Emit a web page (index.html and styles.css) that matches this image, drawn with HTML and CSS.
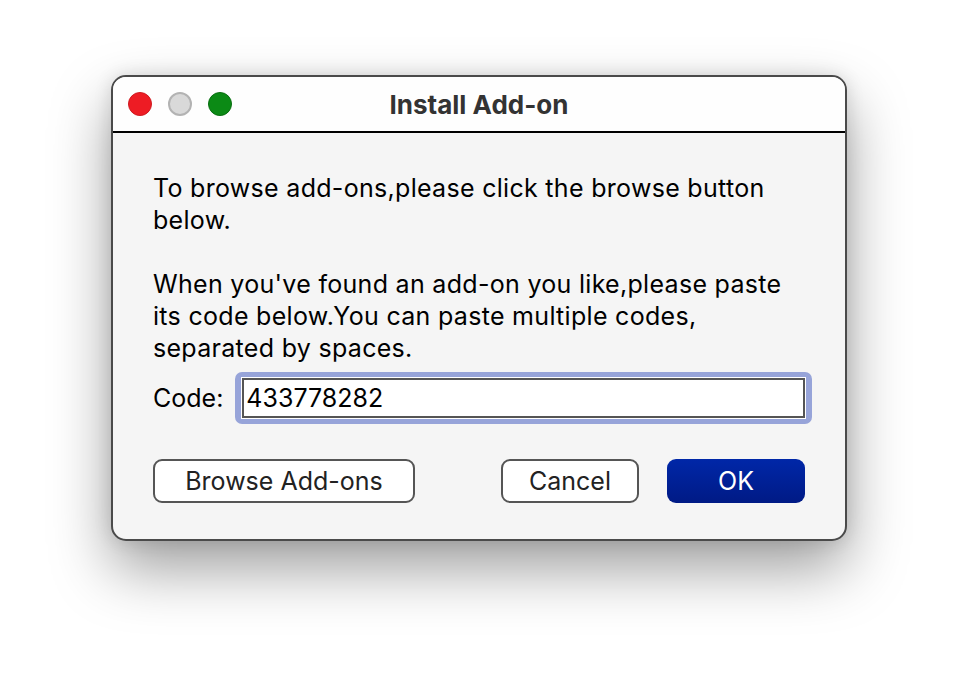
FILE: index.html
```html
<!DOCTYPE html>
<html lang="en">
<head>
<meta charset="utf-8">
<title>Install Add-on</title>
<link rel="stylesheet" href="styles.css">
</head>
<body>
<div class="stage">
  <div class="window">
    <div class="titlebar">
      <div class="lights">
        <span class="light red"></span>
        <span class="light gray"></span>
        <span class="light green"></span>
      </div>
      <div class="title">Install Add-on</div>
    </div>
    <div class="content">
      <p class="para">To browse add-ons,please click the browse button<br>below.</p>
      <p class="para">When you've found an add-on you like,please paste<br>its code below.You can paste multiple codes,<br>separated by spaces.</p>
      <div class="code-row">
        <span class="code-label">Code:</span>
        <div class="focus-ring">
          <div class="input">433778282</div>
        </div>
      </div>
      <div class="buttons">
        <button class="btn">Browse Add-ons</button>
        <div class="spacer"></div>
        <button class="btn small">Cancel</button>
        <button class="btn small primary">OK</button>
      </div>
    </div>
  </div>
</div>
</body>
</html>
```
FILE: styles.css
```css
html, body {
  margin: 0;
  padding: 0;
  background: #ffffff;
  width: 958px;
  height: 688px;
  overflow: hidden;
}

.stage {
  display: flex;
  justify-content: center;
  padding-top: 75px;
  font-family: Inter, "Liberation Sans", sans-serif;
}

.window {
  width: 736px;
  height: 466px;
  box-sizing: border-box;
  border: 2px solid #4a4a4a;
  border-radius: 15px;
  background: #f5f5f5;
  overflow: hidden;
  box-shadow: 0 28px 60px rgba(0, 0, 0, 0.38), 0 0 18px rgba(0, 0, 0, 0.12);
  display: flex;
  flex-direction: column;
}

.titlebar {
  height: 54px;
  background: #fefefe;
  border-bottom: 2px solid #000;
  position: relative;
  display: flex;
  align-items: center;
  justify-content: center;
}

.lights {
  position: absolute;
  left: 15px;
  top: 15px;
  display: flex;
  gap: 16px;
}

.light {
  width: 24px;
  height: 24px;
  box-sizing: border-box;
  border-radius: 50%;
  display: block;
}

.red { background: #ee1c24; border: 1px solid #cf1a20; }
.gray { background: #d9d9d9; border: 2px solid #b3b3b3; }
.green { background: #0b8a15; border: 1px solid #086e10; }

.title {
  font-weight: 700;
  font-size: 26px;
  color: #333;
}

.content {
  padding: 39px 40px 0 40px;
  font-size: 25px;
  color: #000;
}

.para {
  margin: 0 0 32px 0;
  line-height: 32px;
  white-space: nowrap;
  letter-spacing: 0.3px;
}

.para + .para {
  margin-bottom: 0;
}

.code-row {
  display: flex;
  align-items: center;
  gap: 12px;
  margin-top: 8px;
}

.code-label {
  line-height: 32px;
}

.focus-ring {
  flex: 1;
  background: #97a4d9;
  border-radius: 7px;
  padding: 6px 7px;
  margin-right: -7px;
}

.input {
  height: 40px;
  box-sizing: border-box;
  border: 2px solid #555;
  background: #fff;
  box-shadow: 0 0 0 1px #fff;
  font-size: 25px;
  line-height: 36px;
  padding-left: 2px;
}

.buttons {
  display: flex;
  margin-top: 35px;
}

.spacer { flex: 1; }

.btn {
  font-family: Inter, "Liberation Sans", sans-serif;
  font-size: 25px;
  color: #222;
  background: #fff;
  border: 2px solid #555;
  border-radius: 9px;
  height: 44px;
  width: 262px;
  padding: 0;
}

.btn.small {
  width: 138px;
}

.btn.small + .btn.small {
  margin-left: 28px;
}

.btn.primary {
  border: none;
  color: #fff;
  background: linear-gradient(#0027a8, #001a85);
}
```
